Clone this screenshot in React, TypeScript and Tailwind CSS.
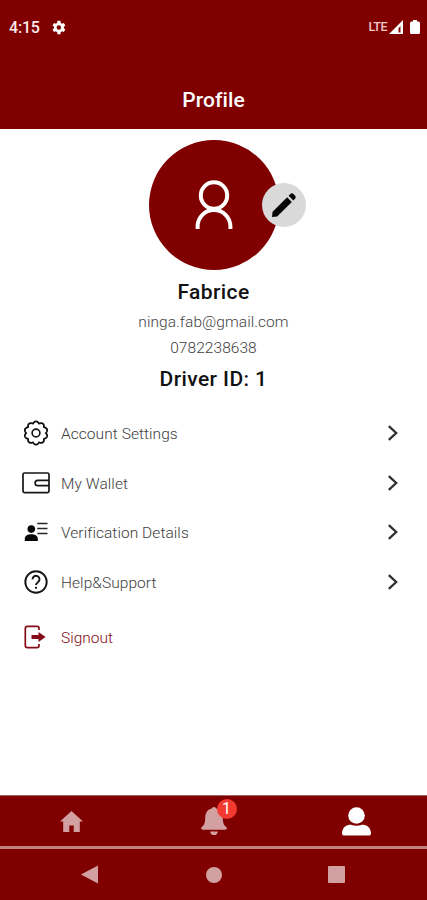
import type { ReactNode } from "react";

const gearPath = (() => {
  const points: string[] = [];
  for (let i = 0; i < 200; i++) {
    const a = (i / 200) * Math.PI * 2;
    const r = 9.8 + 1.8 * Math.abs(Math.cos(a * 5));
    points.push(`${(13 + r * Math.sin(a)).toFixed(2)} ${(13 - r * Math.cos(a)).toFixed(2)}`);
  }
  return `M${points.join("L")}Z`;
})();

function GearIcon() {
  return (
    <svg width="26" height="26" viewBox="0 0 26 26" fill="none" stroke="#111" strokeWidth="1.8" strokeLinejoin="round">
      <path d={gearPath} />
      <circle cx="13" cy="13" r="3.9" strokeWidth="1.6" />
    </svg>
  );
}

function WalletIcon() {
  return (
    <svg width="28" height="22" viewBox="0 0 28 22" fill="none" stroke="#161616" strokeWidth="1.7">
      <rect x="1" y="1" width="26" height="19.6" rx="1.5" />
      <path d="M27 8.3H15.8a2.7 2.7 0 0 0 0 5.4H27" />
    </svg>
  );
}

function DetailsIcon() {
  return (
    <svg width="24" height="20" viewBox="0 0 24 20" fill="#080808">
      <circle cx="7.3" cy="7.1" r="3.8" />
      <path d="M.8 19v-2.5C.8 13.8 4 12.3 7.3 12.3s6.5 1.5 6.5 4.2V19z" />
      <path d="M13.3 1.5H23.5M13.3 6.5H23.5M13.3 11.5H23.5" stroke="#252525" strokeWidth="1.7" />
    </svg>
  );
}

function HelpIcon() {
  return (
    <svg width="24" height="24" viewBox="0 0 24 24" fill="none" stroke="#151515" strokeWidth="1.9">
      <circle cx="12" cy="12" r="10.7" />
      <path d="M8.5 9.4a3.5 3.5 0 1 1 5.8 2.5c-1.3 1.1-2.3 1.5-2.3 3.2M12 16.8v2" />
    </svg>
  );
}

function SignoutIcon() {
  return (
    <svg width="22" height="24" viewBox="0 0 22 24" fill="none" stroke="#850b18" strokeWidth="1.7">
      <path d="M15 5V3.2Q15 1.3 13 1.3H3.4Q1.3 1.3 1.3 3.4v17.2q0 2.1 2.1 2.1H13q2 0 2-1.9V19" />
      <path d="M7.5 10.1h7V7L21.6 12l-7.1 5v-3.1h-7z" fill="#850b18" stroke="none" />
    </svg>
  );
}

function MenuRow({ icon, label }: { icon: ReactNode; label: string }) {
  return (
    <div className="flex h-[49.5px] items-center">
      <div className="ml-[20px] flex w-[32px] justify-center">{icon}</div>
      <span className="ml-[9px] flex-1 pt-[2px] text-[15.5px] font-light leading-5 tracking-[0.06px] text-[#404040]">{label}</span>
      <svg className="mr-[28px]" width="12" height="16" viewBox="0 0 12 16" fill="none" stroke="#303030" strokeWidth="2.3">
        <path d="M1.8 1.2L9.2 8l-7.4 6.8" />
      </svg>
    </div>
  );
}

function StatusBar() {
  return (
    <div className="flex h-[54px] items-center pl-[9px] text-[#ffeaea]">
      <span className="w-[42px] pt-[2px] text-[16px] font-medium leading-5 tracking-[-0.2px]">4:15</span>
      <svg width="15" height="15" viewBox="2 2 20 20" fill="#fff">
        <path fillRule="evenodd" d="M19.1 13a7 7 0 0 0 0-2l2-1.6-2-3.5-2.4 1A7 7 0 0 0 15 5.9L14.6 3h-4l-.4 2.9a7 7 0 0 0-1.8 1L6 5.9 4 9.4 6 11a7 7 0 0 0 0 2l-2 1.6 2 3.5 2.4-1a7 7 0 0 0 1.8 1l.4 2.9h4l.4-2.9a7 7 0 0 0 1.7-1l2.4 1 2-3.5zM12.5 15a3 3 0 1 1 0-6 3 3 0 0 1 0 6z" />
      </svg>
      <span className="ml-auto text-[12.5px] font-medium tracking-[-0.5px] text-[#f1c9c9]">LTE</span>
      <svg className="ml-[2px] mr-[7px]" width="14" height="14" viewBox="0 0 14 14">
        <path fill="#fff" fillRule="evenodd" d="M0 14L14 0v14zM9.5 12.5h2V6l-2 2.2z" />
      </svg>
      <svg className="mr-[7px]" width="10" height="14" viewBox="0 0 10 14" fill="#fff">
        <path d="M3 0h4v1.5h1.5Q10 1.5 10 3v9.5q0 1.5-1.5 1.5h-7Q0 14 0 12.5V3q0-1.5 1.5-1.5H3z" />
      </svg>
    </div>
  );
}

export default function App() {
  return (
    <div className="flex h-[900px] w-[427px] flex-col bg-white font-[Roboto,sans-serif]">
      <header className="h-[128.5px] bg-[#800000]">
        <StatusBar />
        <h1 className="pt-[34px] text-center text-[21px] font-medium leading-6 tracking-[0.1px] text-white">Profile</h1>
      </header>

      <section className="flex flex-col items-center pt-[11.5px]">
        <div className="relative flex size-[130px] items-center justify-center rounded-full bg-[#800000]">
          <svg width="38" height="50" viewBox="0 0 38 50" fill="none" stroke="#fff" strokeWidth="4">
            <circle cx="19" cy="15.5" r="13.2" />
            <path d="M2.6 49v-2.5a16.4 16.4 0 0 1 32.8 0V49" />
          </svg>
          <div className="absolute left-[113px] top-[43px] flex size-[44px] items-center justify-center rounded-full bg-[#d9d9d9]">
            <svg width="26" height="26" viewBox="0 0 26 26" fill="#050505">
              <path d="M1 25l.6-5.2L16.1 5.3l4.7 4.7L6.2 24.4z" />
              <path d="M17.6 3.8l2-2q1.4-1.2 2.9.2l1.7 1.8q1.2 1.4 0 2.7l-1.9 2z" />
            </svg>
          </div>
        </div>
        <h2 className="mt-[9px] text-[21px] font-medium leading-[26px] tracking-[0.4px] text-[#111]">Fabrice</h2>
        <p className="mt-[7px] text-[15.5px] font-light leading-5 tracking-[0.06px] text-[#444]">ninga.fab@gmail.com</p>
        <p className="mt-[6px] text-[15.5px] font-light leading-5 tracking-[0.06px] text-[#404040]">0782238638</p>
        <h2 className="mt-[8px] text-[21px] font-medium leading-[26px] tracking-[0.4px] text-[#111]">Driver ID: 1</h2>
      </section>

      <nav className="mt-[16.5px]">
        <MenuRow icon={<GearIcon />} label="Account Settings" />
        <MenuRow icon={<WalletIcon />} label="My Wallet" />
        <MenuRow icon={<DetailsIcon />} label="Verification Details" />
        <MenuRow icon={<HelpIcon />} label="Help&Support" />
        <div className="mt-[6px] flex h-[49px] items-center">
          <div className="ml-[19px] flex w-[32px] justify-center"><SignoutIcon /></div>
          <span className="ml-[10px] pt-[1px] text-[15.5px] font-light leading-5 text-[#800a18]">Signout</span>
        </div>
      </nav>

      <footer className="mt-auto h-[105px] bg-[#800000]">
        <div className="flex h-[54px] items-center justify-between border-b-[3px] border-t border-b-[#bd8080] border-t-[#a76262] pl-[60px] pr-[56px]">
          <svg width="23" height="21" viewBox="0 0 23 21" fill="#d2a0a0">
            <path d="M11.5 0L23 10.4h-3.2V21h-6.1v-6.5H9.3V21H3.2V10.4H0z" />
          </svg>
          <div className="relative left-[1px]">
            <svg width="26" height="28" viewBox="0 0 26 28" fill="#d2a0a0">
              <path d="M13 0q2 0 2.3 1.6C20 2.7 21.8 6.5 21.8 11c0 5 1.2 7.2 3.2 8.8 1.6 1.4.8 2.9-1 2.9H2c-1.8 0-2.6-1.5-1-2.9 2-1.6 3.2-3.8 3.2-8.8 0-4.5 1.8-8.3 6.5-9.4Q11 0 13 0zM9.2 24.4h7.6Q16.5 28 13 28t-3.8-3.6z" />
            </svg>
            <span className="absolute left-[16px] top-[-8px] flex size-[20px] items-center justify-center rounded-full bg-[#f33a30] text-[16px] leading-none text-white">1</span>
          </div>
          <svg width="29" height="29" viewBox="0 0 29 29" fill="#fff">
            <circle cx="14.5" cy="8.5" r="8.3" />
            <path d="M9 17.8q5.5 2 11 0c5 0 8.2 2.4 9 7.8q.3 3-2.4 3H2.4q-2.7 0-2.4-3c.8-5.4 4-7.8 9-7.8z" />
          </svg>
        </div>
        <div className="flex h-[51px] items-center pb-[2px] pl-[81px] pt-[2px]">
          <svg width="17" height="19" viewBox="0 0 17 19" fill="#d2a0a0"><path d="M0 9.5L17 .5v18z" /></svg>
          <div className="ml-[108px] size-[16px] rounded-full bg-[#d2a0a0]" />
          <div className="ml-[106px] size-[17px] rounded-[1px] bg-[#d2a0a0]" />
        </div>
      </footer>
    </div>
  );
}
